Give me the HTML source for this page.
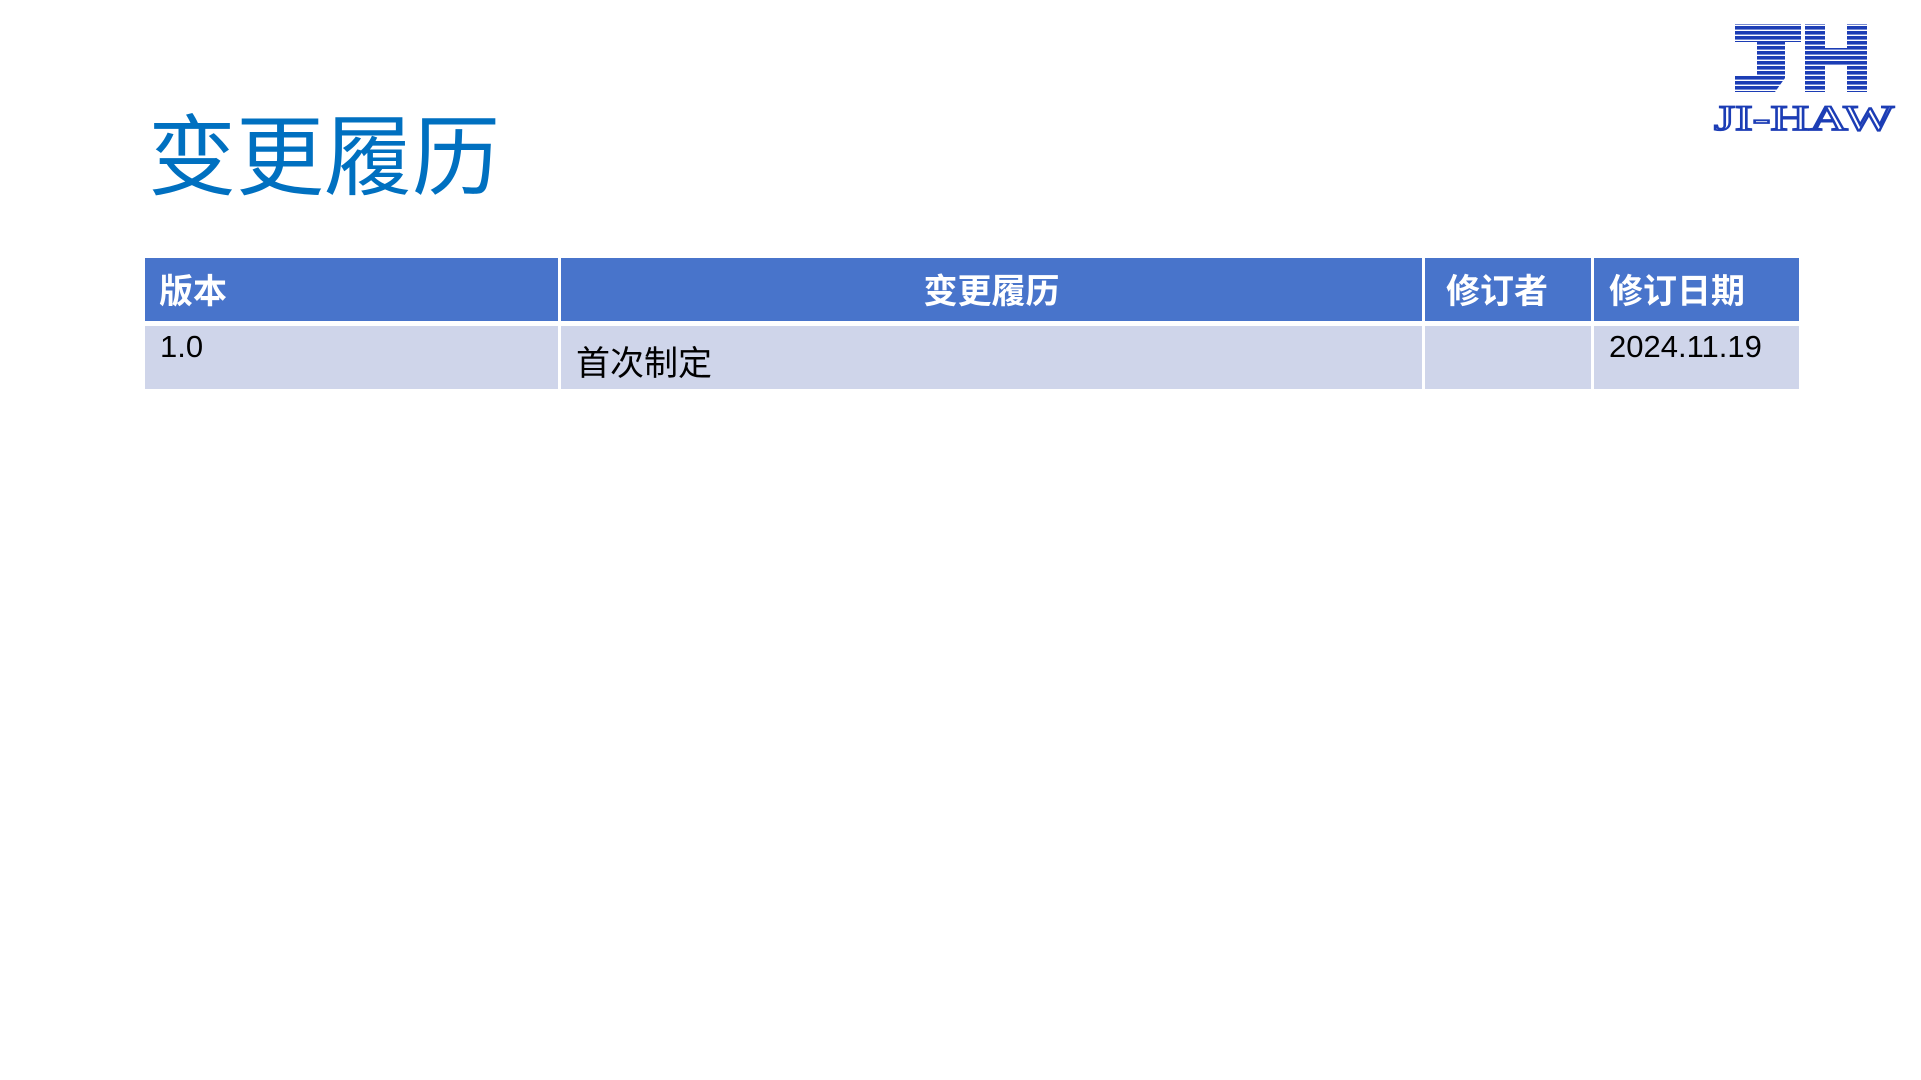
<!DOCTYPE html>
<html><head><meta charset="utf-8"><style>
body{margin:0;width:1921px;height:1080px;background:#fff;position:relative;overflow:hidden;font-family:"Liberation Sans","Noto Sans CJK SC",sans-serif}
.t{position:absolute;left:148px;top:98px;font-size:88px;color:#0070C0;font-family:"Noto Sans CJK SC",sans-serif;line-height:1.2}
.c{position:absolute;box-sizing:border-box}
.h{background:#4874CB;color:#fff;font-weight:bold;font-size:34px;font-family:"Noto Sans CJK SC",sans-serif;top:258px;height:63px;line-height:62px}
.r{background:#CFD5EA;color:#000;top:326px;height:63px;font-size:31px}
</style></head><body>
<div class="t">变更履历</div>
<div class="c h" style="left:145px;width:413px;padding-left:14px">版本</div>
<div class="c h" style="left:561px;width:861px;text-align:center">变更履历</div>
<div class="c h" style="left:1425px;width:166px;padding-left:21px">修订者</div>
<div class="c h" style="left:1594px;width:205px;padding-left:15px">修订日期</div>
<div class="c r" style="left:145px;width:413px;padding:3px 0 0 15px">1.0</div>
<div class="c r" style="left:561px;width:861px;padding:10px 0 0 15px;font-family:'Noto Sans CJK SC',sans-serif;font-size:34px">首次制定</div>
<div class="c r" style="left:1425px;width:166px"></div>
<div class="c r" style="left:1594px;width:205px;padding:3px 0 0 15px">2024.11.19</div>
<svg style="position:absolute;left:1709px;top:16px" width="200" height="120" viewBox="0 0 200 120">
<defs><pattern id="s" width="4" height="5" patternUnits="userSpaceOnUse"><rect width="4" height="3.6" fill="#1c3db5"/></pattern></defs>
<path d="M26 8H92V26H76V62L66 76H26V60H48V26H26Z" fill="url(#s)"/>
<path d="M96 8H116V32H138V8H158V76H138V50H116V76H96Z" fill="url(#s)"/>
<text x="95" y="114" text-anchor="middle" font-family="Liberation Serif,serif" font-size="36" fill="#fff" stroke="#1c3db5" stroke-width="1.8" textLength="180" lengthAdjust="spacingAndGlyphs">JI-HAW</text>
</svg>
</body></html>
